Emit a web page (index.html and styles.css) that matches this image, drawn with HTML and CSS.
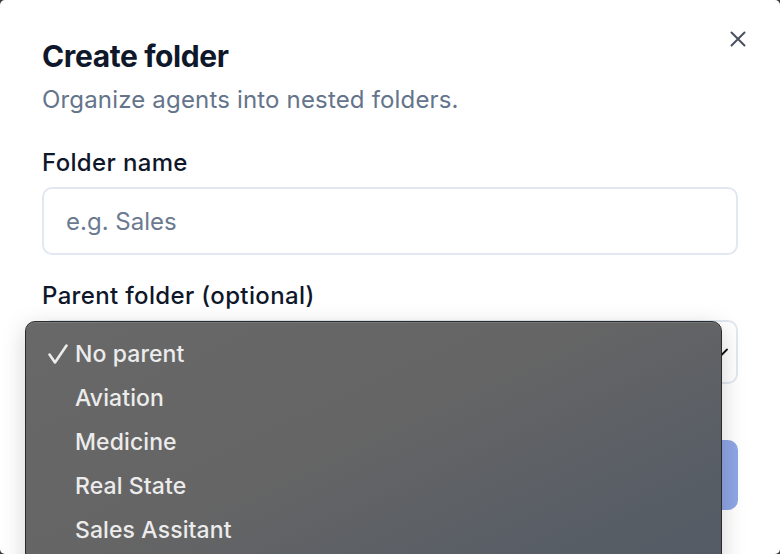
FILE: index.html
```html
<!DOCTYPE html>
<html>
<head>
<meta charset="utf-8">
<link rel="stylesheet" href="styles.css">
</head>
<body>
<div class="dialog">
  <button class="close" aria-label="Close">
    <svg width="16" height="16" viewBox="0 0 16 16"><path d="M1.5 1.5 L14.5 14.5 M14.5 1.5 L1.5 14.5" stroke="#4b5060" stroke-width="2" stroke-linecap="round" fill="none"/></svg>
  </button>
  <h1 class="title">Create folder</h1>
  <p class="subtitle">Organize agents into nested folders.</p>
  <label class="label label-first">Folder name</label>
  <div class="input"><span class="placeholder">e.g. Sales</span></div>
  <label class="label label-second">Parent folder (optional)</label>
  <div class="select">
    <span class="select-value">No parent</span>
    <svg class="chevron" width="18" height="18" viewBox="0 0 18 18"><path d="M3 6.5 L9 12.5 L15 6.5" stroke="#111" stroke-width="1.8" fill="none" stroke-linecap="round" stroke-linejoin="round"/></svg>
  </div>
  <div class="actions">
    <button class="primary">Create</button>
  </div>
  <div class="menu">
    <div class="item">
      <svg class="check" width="22" height="22" viewBox="0 0 22 22"><path d="M2.5 11.5 L8 19.5 L19.5 2.5" stroke="#ececec" stroke-width="2.6" fill="none" stroke-linecap="round" stroke-linejoin="round"/></svg>
      No parent
    </div>
    <div class="item">Aviation</div>
    <div class="item">Medicine</div>
    <div class="item">Real State</div>
    <div class="item">Sales Assitant</div>
  </div>
</div>
</body>
</html>
```
FILE: styles.css
```css
html, body {
  margin: 0;
  padding: 0;
  background: #3a3a3a;
}
body {
  font-family: Inter, "Noto Sans", sans-serif;
  width: 780px;
  height: 554px;
  overflow: hidden;
}
.dialog {
  position: relative;
  box-sizing: border-box;
  width: 780px;
  height: 554px;
  background: #ffffff;
  border-radius: 5px;
  padding: 40px 42px 0 42px;
  display: flex;
  flex-direction: column;
}
.close {
  position: absolute;
  top: 31px;
  right: 34px;
  width: 16px;
  height: 16px;
  padding: 0;
  border: 0;
  background: transparent;
  display: flex;
}
.title {
  margin: 0;
  font-size: 30px;
  line-height: 32px;
  font-weight: 700;
  color: #0f172a;
  letter-spacing: -0.4px;
}
.subtitle {
  margin: 13px 0 0 0;
  font-size: 24px;
  line-height: 30px;
  color: #64748b;
  letter-spacing: 0.17px;
}
.label {
  display: block;
  font-size: 24px;
  line-height: 30px;
  font-weight: 500;
  color: #0f172a;
  letter-spacing: 0.35px;
}
.label-first { margin-top: 33px; }
.label-second { margin-top: 26px; }
.input {
  margin-top: 9px;
  box-sizing: border-box;
  height: 68px;
  border: 2px solid #e2e8f0;
  border-radius: 10px;
  padding: 0 22px;
  display: flex;
  align-items: center;
}
.placeholder {
  font-size: 24px;
  color: #6b7a90;
}
.select {
  margin-top: 9px;
  box-sizing: border-box;
  height: 64px;
  border: 2px solid #e2e8f0;
  border-radius: 10px;
  padding: 0 6px 0 22px;
  display: flex;
  align-items: center;
  justify-content: space-between;
  font-size: 24px;
  color: #0f172a;
}
.actions {
  margin-top: 56px;
  display: flex;
  justify-content: flex-end;
}
.primary {
  height: 70px;
  width: 130px;
  border: 0;
  border-radius: 10px;
  background: #8fa6e6;
  color: #ffffff;
  font-family: Inter, sans-serif;
  font-size: 22px;
  font-weight: 600;
}
.menu {
  position: absolute;
  left: 25px;
  top: 321px;
  width: 697px;
  height: 260px;
  box-sizing: border-box;
  padding-top: 10px;
  border: 1px solid #2b2b2b;
  border-radius: 10px;
  background: linear-gradient(155deg, #686868 0%, #656565 45%, #5a5f66 75%, #535a64 100%);
  box-shadow: inset 0 1px 0 rgba(255,255,255,0.12), 0 6px 24px rgba(0,0,0,0.18);
}
.item {
  position: relative;
  height: 44px;
  line-height: 44px;
  padding-left: 49px;
  font-family: Inter, sans-serif;
  font-size: 23px;
  font-weight: 500;
  color: #ececec;
  letter-spacing: 0.1px;
}
.check {
  position: absolute;
  left: 21px;
  top: 11px;
}
```
